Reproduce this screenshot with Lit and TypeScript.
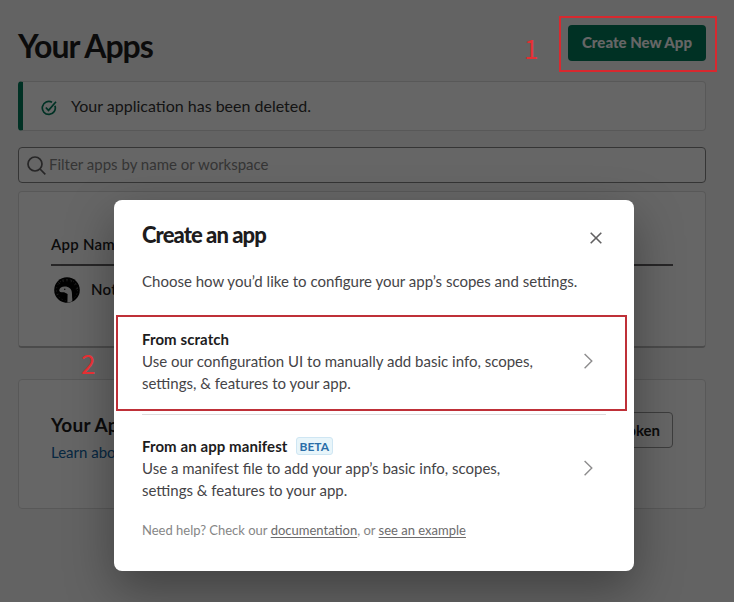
import { LitElement, html, css, svg } from "lit";
import { customElement, property } from "lit/decorators.js";

@customElement("app-option")
class AppOption extends LitElement {
  @property() heading = "";
  @property() badge = "";

  static styles = css`
    :host { display: flex; align-items: center; }
    .copy { flex: 1; line-height: 22px; }
    .head { display: flex; align-items: center; gap: 8px; font-weight: 700; color: #1d1c1d; }
    .name { letter-spacing: 0.08px; }
    .badge {
      box-sizing: border-box; height: 18px; padding: 0 3px; border: 1px solid #cfe6f3; border-radius: 3px;
      background: #e8f5fa; color: #2a6ea8; font-size: 12px; line-height: 17px;
    }
    .chevron { width: 20px; height: 20px; margin-right: 8px; fill: none; stroke: #8d8c8d; stroke-width: 1.4; }
  `;

  render() {
    return html`
      <div class="copy">
        <div class="head"><span class="name">${this.heading}</span>${this.badge ? html`<span class="badge">${this.badge}</span>` : ""}</div>
        <slot></slot>
      </div>
      <svg class="chevron" viewBox="0 0 20 20">${svg`<path d="M6.6 2.9 13.8 10 6.6 17.3" />`}</svg>
    `;
  }
}

@customElement("app-root")
class AppRoot extends LitElement {
  static styles = css`
    :host {
      display: block; position: relative; height: 602px; overflow: hidden; background: #f8f8f8;
      font: 15px/22px Lato, sans-serif; color: #1d1c1d;
    }
    .page { box-sizing: border-box; display: flex; flex-direction: column; width: 724px; padding: 25px 18px 0; }
    .top { display: flex; justify-content: space-between; height: 56px; }
    h1 { margin: 0; font-size: 32px; line-height: 41px; font-weight: 700; letter-spacing: -1.05px; }
    .create {
      width: 138px; height: 36px; border-radius: 4px; background: #007a5a; color: #fff;
      font-weight: 900; line-height: 35px; text-align: center;
    }
    .box { box-sizing: border-box; border: 1px solid #ddd; border-radius: 4px; background: #fff; }
    .notice { display: flex; align-items: center; gap: 14px; height: 50px; padding-left: 18px; border-left: 5px solid #007a5a; color: #333; font-size: 16px; }
    .notice svg { width: 16px; height: 16px; margin-top: 3px; fill: none; stroke: #007a5a; stroke-width: 1.7; }
    .filter { display: flex; align-items: center; gap: 2px; height: 36px; margin-top: 16px; padding-left: 7px; border-color: #868686; color: #868686; }
    .filter span { margin-bottom: 3px; }
    .filter svg { width: 21px; height: 21px; margin-top: 1px; fill: none; stroke: #616061; stroke-width: 1.7; }
    .list { height: 157px; margin-top: 8px; padding: 41px 32px 0; border-bottom: 2px solid #bbb; }
    .column { height: 31px; border-bottom: 2px solid #616061; font-weight: 600; letter-spacing: 0.25px; }
    .row { display: flex; align-items: center; gap: 11px; padding: 11px 0 0 3px; font-weight: 600; letter-spacing: 0.25px; }
    .row span { margin-bottom: 2px; }
    .row svg { width: 26px; height: 26px; }
    .tokens { display: flex; justify-content: space-between; align-items: flex-start; height: 130px; margin-top: 31px; padding: 32px 32px 0; }
    h2 { margin: 0 0 3px; font-size: 19px; line-height: 26px; font-weight: 700; letter-spacing: 0.2px; }
    .learn { color: #1264a3; }
    .generate { padding: 0 12px; height: 34px; line-height: 35px; border: 1px solid #999; border-radius: 4px; font-weight: 700; }
    .veil { position: absolute; inset: 0; background: rgba(0, 0, 0, 0.6); }
    .dialog {
      position: absolute; left: 114px; top: 200px; box-sizing: border-box; width: 520px; height: 371px;
      padding: 19px 28px 0; border-radius: 8px; background: #fff; color: #454447; box-shadow: 0 18px 48px rgba(0, 0, 0, 0.35);
    }
    .title { display: flex; align-items: center; justify-content: space-between; height: 32px; color: #1d1c1d; font-size: 22px; font-weight: 900; letter-spacing: -0.93px; }
    .title svg { width: 14px; height: 14px; margin: 6px 3px 0 0; fill: none; stroke: #616061; stroke-width: 1.6; }
    .intro { margin-top: 19px; }
    .first { margin-top: 36px; }
    .rule { height: 1px; margin: 20px 0 20px; background: #ddd; }
    .help { margin-top: 18px; color: #868686; font-size: 13px; }
    .help u { color: #6c6b6c; text-underline-offset: 2px; }
    .mark { position: absolute; box-sizing: border-box; border: 2px solid #cb2f36; }
    .mark.button { left: 559px; top: 16px; width: 158px; height: 56px; border-color: #d8292f; }
    .mark.scratch { left: 116px; top: 315px; width: 511px; height: 96px; border-color: #bf3038; }
    .digit { position: absolute; color: #e52f33; font: 26px/30px "Noto Sans CJK SC", sans-serif; }
    .digit.one { left: 524px; top: 33px; }
    .digit.two { left: 81px; top: 348px; }
  `;

  render() {
    return html`
      <main class="page">
        <header class="top"><h1>Your Apps</h1><div class="create">Create New App</div></header>
        <div class="box notice">
          <svg viewBox="0 0 16 16"><path d="M13.9 5.7A6.5 6.5 0 1 1 11 2.3" /><path d="m4.8 7.5 2.7 2.9L15 1.7" /></svg>
          <span>Your application has been deleted.</span>
        </div>
        <div class="box filter">
          <svg viewBox="0 0 21 21"><circle cx="9" cy="9" r="7" /><path d="m14 14 5.3 5.3" /></svg>
          <span>Filter apps by name or workspace</span>
        </div>
        <section class="box list">
          <div class="column">App Name</div>
          <div class="row">
            <svg viewBox="0 0 26 26">
              <circle cx="13" cy="13" r="12.8" fill="#050505" />
              <g fill="none" stroke="#555" stroke-width="0.9">
                <circle cx="13" cy="13" r="10.6" stroke-dasharray="1.2 2.3" />
                <path d="M6 7 4.4 5.2M9.4 5 8.6 2.6M13 4.4V2M17 5.2l.9-2.4M20.3 7.9l1.9-1.7M4.6 17l-2 .8M21.8 12l2.2-.6" />
              </g>
              <path fill="#eee" d="M5.2 13.3c.3-2.5 2.5-3.8 5.5-3.8 4.3 0 6.9 2.3 7.2 6.2l.4 8.5c-2 1-4.4 1.4-6.2 1.2l.8-8.5c-1.1-1.1-2.3-1.6-4-1.6-2 0-3.7-.3-3.7-2z" />
              <path fill="#050505" d="m12.1 16.4 1.5.6-.2 8.4-2 .1zM10 11.8h1.4v1H10z" />
            </svg>
            <span>Notify</span>
          </div>
        </section>
        <section class="box tokens">
          <div><h2>Your App Configuration Tokens</h2><div class="learn">Learn about tokens</div></div>
          <div class="generate">Generate Token</div>
        </section>
      </main>
      <div class="veil"></div>
      <section class="dialog">
        <div class="title"><span>Create an app</span><svg viewBox="0 0 14 14"><path d="m1.7 1.7 10.6 10.6M12.3 1.7 1.7 12.3" /></svg></div>
        <div class="intro">Choose how you’d like to configure your app’s scopes and settings.</div>
        <app-option class="first" heading="From scratch">Use our configuration UI to manually add basic info, scopes,<br />settings, &amp; features to your app.</app-option>
        <div class="rule"></div>
        <app-option heading="From an app manifest" badge="BETA">Use a manifest file to add your app’s basic info, scopes,<br />settings &amp; features to your app.</app-option>
        <div class="help">Need help? Check our <u>documentation</u>, or <u>see an example</u></div>
      </section>
      <div class="mark button"></div>
      <div class="mark scratch"></div>
      <div class="digit one">1</div>
      <div class="digit two">2</div>
    `;
  }
}
